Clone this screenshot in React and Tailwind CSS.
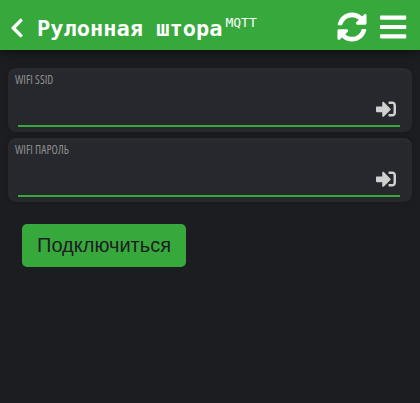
import React from 'react';
import { FaChevronLeft, FaSyncAlt, FaBars, FaSignInAlt } from 'react-icons/fa';

function Field({ label }) {
  return (
    <div className="flex h-16 flex-col rounded-lg bg-[#27282d] shadow-[0_0_5px_rgba(0,0,0,0.2),inset_0_4px_4px_rgba(255,255,255,0.02)]">
      <label className="h-[22px] whitespace-nowrap pl-[7px] font-['Open_Sans',sans-serif] text-[11.7px] leading-[23px] text-[#8e8e90] [font-stretch:76%]">
        {label}
      </label>
      <div className="ml-[10px] mr-3 flex h-[37px] items-center justify-end border-b-2 border-[#37a93c] pr-1 pt-[3px]">
        <FaSignInAlt className="size-5 text-[#d0d0d0]" />
      </div>
    </div>
  );
}

export default function App() {
  return (
    <div className="h-[403px] w-[420px] overflow-hidden bg-[#1c1d21]">
      <header className="flex h-[50px] items-center bg-[#37a93c] text-white shadow-[0_0_10px_rgba(0,0,0,0.7)]">
        <FaChevronLeft className="ml-[10px] mt-[5px] h-[22px] w-[14px]" />
        <h1 className="ml-[13px] mt-[7px] flex items-start whitespace-nowrap font-['DejaVu_Sans_Mono',monospace] text-[22px] font-bold leading-[26px]">
          Рулонная штора
          <sup className="top-0 ml-[3px] -mt-px text-[13px] font-normal leading-4">MQTT</sup>
        </h1>
        <div className="ml-auto mr-[13.5px] mt-[3px] flex items-center gap-[13px]">
          <FaSyncAlt className="size-[30px]" />
          <FaBars className="h-[30px] w-[26.25px]" />
        </div>
      </header>
      <main className="px-2 pt-[18px]">
        <div className="flex flex-col gap-[6px]">
          <Field label="WIFI SSID" />
          <Field label="WIFI ПАРОЛЬ" />
        </div>
        <button className="ml-[14px] mt-[22px] flex h-[43px] w-[164px] items-center justify-center rounded-[5px] bg-[#37a93c] pb-[2px] font-['Liberation_Sans',Arial,sans-serif] text-[20px] text-[#1c1d21]">
          Подключиться
        </button>
      </main>
    </div>
  );
}
